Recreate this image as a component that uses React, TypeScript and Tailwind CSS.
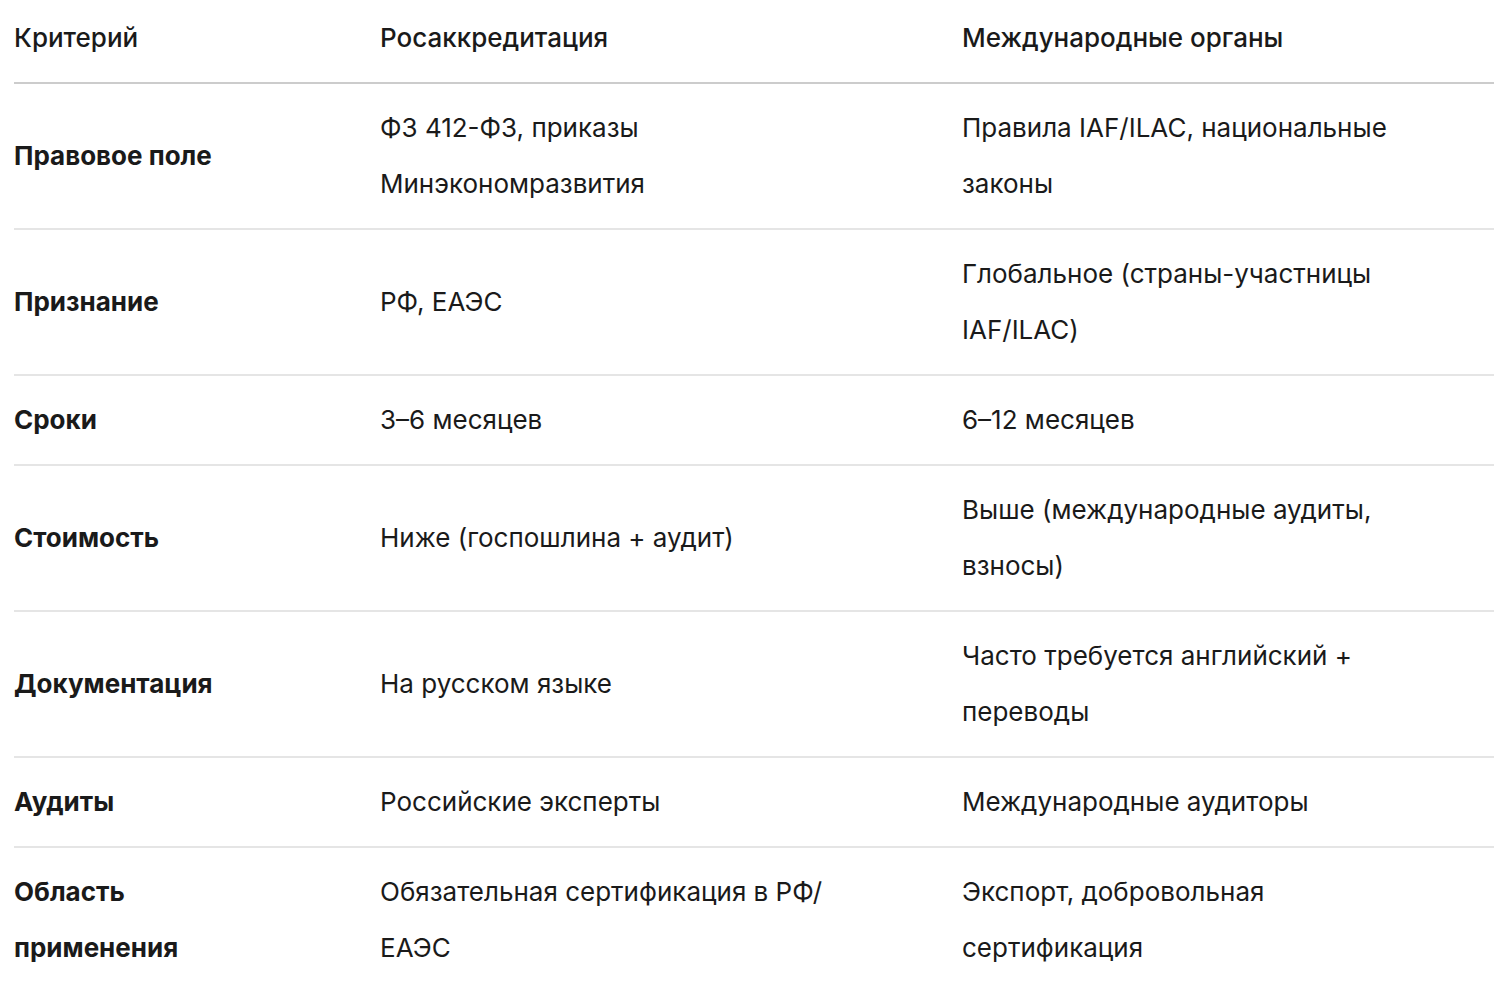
import React from "react";

type Row = { k: string; a: React.ReactNode; b: React.ReactNode };

const rows: Row[] = [
  { k: "Правовое поле", a: "ФЗ 412-ФЗ, приказы Минэкономразвития", b: "Правила IAF/ILAC, национальные законы" },
  { k: "Признание", a: "РФ, ЕАЭС", b: "Глобальное (страны-участницы IAF/ILAC)" },
  { k: "Сроки", a: "3–6 месяцев", b: "6–12 месяцев" },
  { k: "Стоимость", a: "Ниже (госпошлина + аудит)", b: "Выше (международные аудиты, взносы)" },
  { k: "Документация", a: "На русском языке", b: "Часто требуется английский + переводы" },
  { k: "Аудиты", a: "Российские эксперты", b: "Международные аудиторы" },
  {
    k: "Область применения",
    a: (
      <>
        Обязательная сертификация в РФ/<wbr />ЕАЭС
      </>
    ),
    b: "Экспорт, добровольная сертификация",
  },
];

export default function App() {
  return (
    <div
      className="min-h-screen bg-white text-[#1a1a1a] text-[26px] leading-[56px] px-[14px] pr-[16px]"
      style={{ fontFamily: "Inter, 'Noto Sans', sans-serif" }}
    >
      <div className="grid grid-cols-[366px_582px_1fr] border-b-2 border-[#cccccc] pt-[10px] pb-4 font-medium">
        <div className="pr-[100px]">Критерий</div>
        <div className="pr-[90px]">Росаккредитация</div>
        <div className="pr-[70px]">Международные органы</div>
      </div>
      {rows.map((r) => (
        <div
          key={r.k}
          className="grid grid-cols-[366px_582px_1fr] items-center border-b-2 border-[#e5e5e5] py-4"
        >
          <div className="pr-[110px] font-bold">{r.k}</div>
          <div className="pr-[90px]">{r.a}</div>
          <div className="pr-[70px]">{r.b}</div>
        </div>
      ))}
    </div>
  );
}
